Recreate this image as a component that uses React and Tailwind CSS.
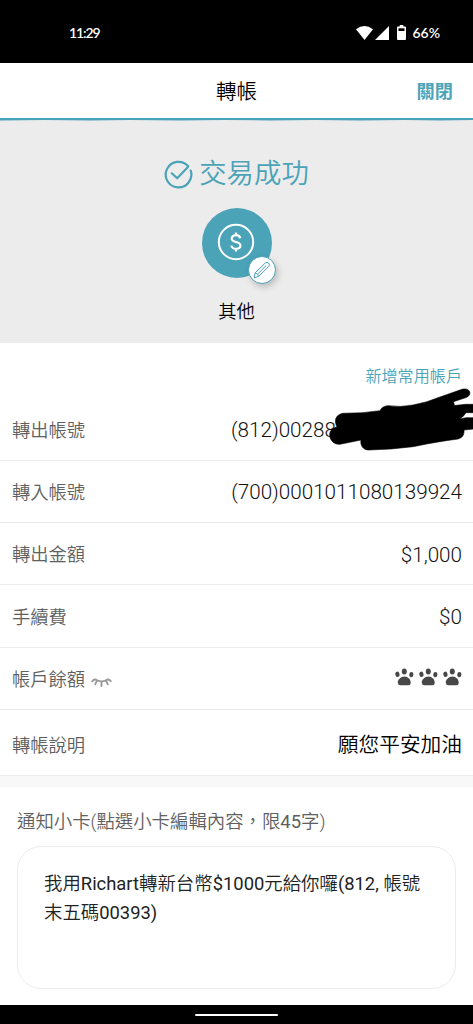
import React from "react";

const rows = [
  { label: "轉出帳號", value: "(812)00288", masked: true },
  { label: "轉入帳號", value: "(700)0001011080139924" },
  { label: "轉出金額", value: "$1,000" },
  { label: "手續費", value: "$0" },
];

function StatusBar() {
  return (
    <div className="flex h-[63px] shrink-0 items-center justify-between bg-black pt-[2px] pr-[33px] pl-[69px] font-['Lato','Noto_Sans_CJK_TC',sans-serif] text-[14px] font-semibold text-white">
      <span className="tracking-[-1.1px]">11:29</span>
      <div className="flex items-center">
        <svg width="17" height="14" viewBox="0 0 17 14" fill="#fff">
          <path d="M0 3.2Q8.5-3.2 17 3.2L8.5 14Z" />
        </svg>
        <svg className="ml-[2px]" width="14" height="14" viewBox="0 0 14 14" fill="#fff">
          <path d="M14 0V14H0Z" />
        </svg>
        <svg className="ml-[8px]" width="9" height="15" viewBox="0 0 9 15">
          <path d="M2.7 0h3.6v1.5h1.7a1 1 0 0 1 1 1V14a1 1 0 0 1-1 1H1a1 1 0 0 1-1-1V2.5a1 1 0 0 1 1-1h1.7Z" fill="#fff" />
          <path d="M1.5 3.3h6v2.7h-6Z" fill="#000" />
        </svg>
        <span className="ml-[6px]">66%</span>
      </div>
    </div>
  );
}

function Header() {
  return (
    <div className="relative flex h-[55px] shrink-0 items-center justify-center bg-white pt-[3px]">
      <h1 className="text-[20.5px] font-[350] text-black">轉帳</h1>
      <button className="absolute right-[20px] text-[18.2px] font-bold text-[#4ba3b7]">關閉</button>
    </div>
  );
}

function Result() {
  return (
    <div className="flex h-[222px] shrink-0 flex-col items-center bg-[#ececec]">
      <div className="mt-[31px] flex h-[40px] items-center text-[#4ba3b7]">
        <svg className="mt-[4px] mr-[6px]" width="29" height="29" viewBox="0 0 29 29" fill="none" stroke="currentColor" strokeWidth="2.2" strokeLinecap="round" strokeLinejoin="round">
          <path d="M24.2 6.2A12.8 12.8 0 1 0 26.7 10.6" />
          <path d="M7.8 13.3L13.2 18.2L23.7 7.2" />
        </svg>
        <span className="pt-[5px] text-[27.4px] leading-none font-[350]">交易成功</span>
      </div>
      <div className="relative mt-[16px] flex size-[70px] items-center justify-center rounded-full bg-[#4ba3b7]">
        <svg className="-mt-[2px] -ml-[1px]" width="38" height="38" viewBox="0 0 38 38" fill="none" stroke="#fff" strokeWidth="2">
          <circle cx="19" cy="19" r="17.2" />
          <path d="M23.3 15.2C22.9 13.3 21.3 12.2 19 12.2C16.5 12.2 14.7 13.5 14.7 15.5C14.7 17.7 16.5 18.4 19 19C21.6 19.6 23.4 20.4 23.4 22.5C23.4 24.6 21.6 25.8 19 25.8C16.5 25.8 14.8 24.6 14.4 22.6M19 9.5V12.2M19 25.8V28.5" strokeWidth="2.2" />
        </svg>
        <div className="absolute -right-[4px] -bottom-[6px] flex size-[28px] items-center justify-center rounded-full border border-[#4ba3b7] bg-white shadow-[2px_3px_6px_rgba(0,0,0,0.2)]">
          <svg width="18" height="18" viewBox="0 0 18 18" fill="none" stroke="#4ba3b7" strokeWidth="1" strokeLinejoin="round">
            <path d="M1.2 16.8L2 12L12.4 1.8Q14 .5 15.6 2Q17.2 3.6 15.9 5.2L5.6 15.5L1.2 16.8ZM2 12Q5 12 5.6 15.5M5 12.7L13.2 4.6" />
          </svg>
        </div>
      </div>
      <span className="mt-[20px] text-[18.3px] font-[350] text-black">其他</span>
    </div>
  );
}

function ClosedEye() {
  return (
    <svg className="mt-[5px] ml-[6px]" width="21" height="9" viewBox="0 0 21 9" fill="none" stroke="#999" strokeWidth="1.9" strokeLinecap="round">
      <path d="M1.2 3.3Q3.6.2 6 2.4Q10.5 4.4 15 2.4Q17.5.2 19.8 3.3M6 2.6L4.3 6.2M10.5 3.5V8M15 2.6L16.8 6.2" />
    </svg>
  );
}

function Paw() {
  return (
    <svg width="19" height="18" viewBox="0 0 19 18" fill="#484848">
      <ellipse cx="2.4" cy="6.3" rx="2.1" ry="2.7" transform="rotate(-12 2.4 6.3)" />
      <ellipse cx="9.3" cy="3.5" rx="2.5" ry="2.9" />
      <ellipse cx="16.3" cy="6.6" rx="2.1" ry="2.6" transform="rotate(12 16.3 6.6)" />
      <path d="M9.4 8.6C13 8.6 15.9 11.7 15.7 14.7Q15.6 17.3 12.8 17.3H5.7Q3 17.3 2.8 14.8C2.6 11.7 5.8 8.6 9.4 8.6Z" />
    </svg>
  );
}

function Row({ label, icon, tall, children }) {
  return (
    <div className={`flex shrink-0 items-center justify-between border-b border-[#ebebeb] pr-[11px] pl-[12px] ${tall ? "h-[66px] pt-[6px]" : "h-[62.25px] pt-[3px]"}`}>
      <span className="flex items-center text-[18.3px] font-[350] text-[#606060]">
        {label}
        {icon}
      </span>
      {children}
    </div>
  );
}

function Scribble() {
  return (
    <svg className="pointer-events-none absolute -top-[27px] -right-[11px]" width="144" height="64" viewBox="329 388 144 64" fill="#000" stroke="#000" strokeWidth="0.6">
      <path d="M343 413.3Q362 413.5 380 410.7Q382 406 388 405.7Q401 407.5 413 405Q427 402.5 440 397L462 389.3C470 387 473 395 466 397.6L453.5 401.7L454.5 405.5L466 404.3H474V412.7H466L464 415.5L460 419L466 417.7H474V429L464 430C464.5 435 462 438 458 439Q438 441.5 413 446.7Q392 449.5 369 450C363 450 360 445 361 440L340 444.3C332 445 328 437 330.3 431.5Q332.5 427.5 337 427C334 421 335 415 343 413.3Z" />
    </svg>
  );
}

export default function App() {
  return (
    <div className="flex h-[1024px] w-[473px] flex-col overflow-hidden bg-white font-['Roboto','Noto_Sans_CJK_TC',sans-serif]">
      <StatusBar />
      <Header />
      <svg className="block shrink-0 bg-[#ececec]" width="473" height="3" viewBox="0 0 473 3">
        <path d="M0 0H473V2.1L440 2.5L405 1.9L360 2.6L315 2L270 2.5L225 1.9L180 2.6L130 2L90 2.6L45 2L0 2.5Z" fill="#4ba3b7" />
      </svg>
      <Result />

      <div className="flex h-[55.5px] shrink-0 items-end justify-end pr-[11px] pb-[9px]">
        <button className="text-[16.1px] font-[350] text-[#4ba3b7]">新增常用帳戶</button>
      </div>
      {rows.map((row) => (
        <Row key={row.label} label={row.label}>
          {row.masked ? (
            <div className="relative w-[231px] text-[20.65px] font-light text-[#111]">
              {row.value}
              <Scribble />
            </div>
          ) : (
            <span className="text-[20.65px] font-light text-[#111]">{row.value}</span>
          )}
        </Row>
      ))}
      <Row label="帳戶餘額" icon={<ClosedEye />}>
        <span className="flex gap-[5px] pb-[5px]">
          <Paw />
          <Paw />
          <Paw />
        </span>
      </Row>
      <Row label="轉帳說明" tall>
        <span className="text-[20.7px] font-[350] text-black">願您平安加油</span>
      </Row>

      <div className="h-[11px] shrink-0 bg-[#f8f8f8]" />
      <div className="flex flex-1 flex-col px-[17px] pt-[21px]">
        <p className="text-[18.4px] leading-[28px] font-[350] text-[#606060]">
          通知小卡(點選小卡編輯內容，限<span className="font-normal">45</span>字)
        </p>
        <div className="mt-[10px] h-[143px] rounded-[24px] border border-[#ececec] px-[26px] pt-[22px] text-[18.4px] leading-[29px] font-[350] text-[#222]">
          我用<span className="font-normal">Richart</span>轉新台幣<span className="font-normal">$1000</span>元給你囉<span className="font-normal">(812, </span>帳號
          <br />
          末五碼<span className="font-normal">00393)</span>
        </div>
      </div>

      <div className="flex h-[19px] shrink-0 items-center justify-center bg-black">
        <div className="h-[2px] w-[83px] rounded-full bg-white" />
      </div>
    </div>
  );
}
